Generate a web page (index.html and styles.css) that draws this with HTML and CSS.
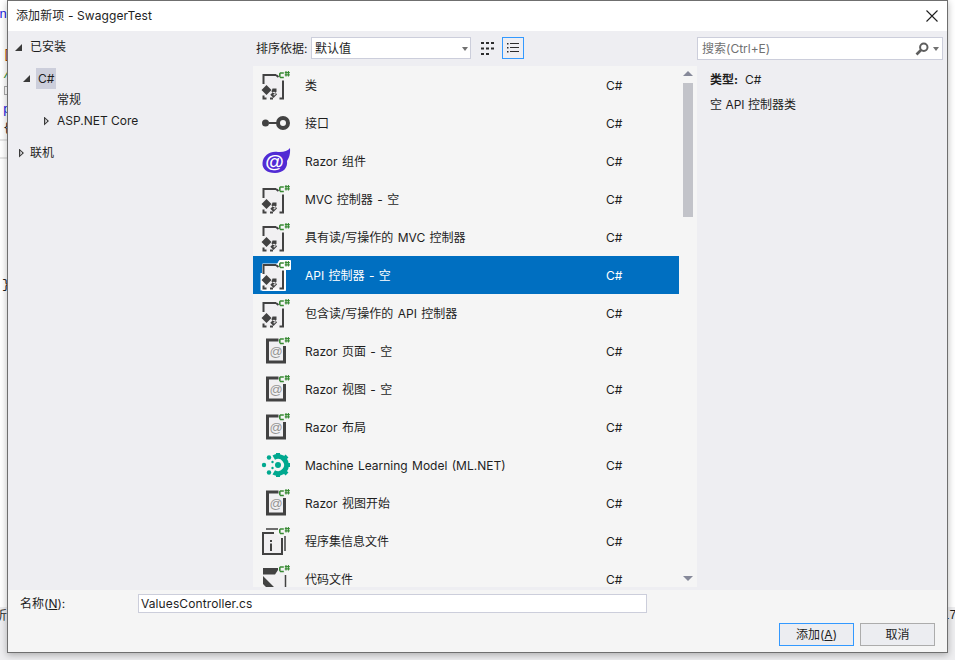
FILE: index.html
```html
<!DOCTYPE html>
<html lang="zh-CN">
<head>
<meta charset="utf-8">
<title>添加新项 - SwaggerTest</title>
<link rel="stylesheet" href="styles.css">
</head>
<body>
<svg class="defs" width="0" height="0" aria-hidden="true">
  <defs>
    <g id="cs">
      <path d="M18 3.400l1.200-1.200h3.600v1.500h-3.200v3h3.200v1.500h-3.600L18 6.500z" fill="#388a34"/>
      <path d="M25 1v5.500M27.400 1v5.500M23.800 2.600h5M23.800 4.900h5" stroke="#388a34" stroke-width="1.100" fill="none"/>
    </g>
    <g id="doc">
      <path d="M2.500 5.500h13l6.500 6v17H2.500z" fill="#f1f0f2"/>
      <path d="M2.500 14V5H15M22 10.500v18h-3.500M15 5l2.500 2" fill="none" stroke="#424242" stroke-width="2"/>
      <path d="M2.500 25.500v3h3M9 28.500h3" fill="none" stroke="#424242" stroke-width="2"/>
      <path d="M5.500 15l5 5-5 5-5-5zM11.500 18.500h4v3.200l-1 1 1.600 1.600-3.600 3.700-3.200-3.200 2.200-2.300-1-1z" fill="#424242"/>
      <path d="M11.800 22.400h2.200v2.400h-1.500" fill="none" stroke="#f1f0f2" stroke-width="1"/>
      <use href="#cs"/>
    </g>
    <g id="razor">
      <path d="M6 4h13l5.500 5v17.500H6z" fill="#f1f0f2"/>
      <path d="M17.500 4H6.500v22h17V10" fill="none" stroke="#424242" stroke-width="3"/>
      <text x="15" y="19.500" class="at">@</text>
      <use href="#cs"/>
    </g>
  </defs>
</svg>

<div class="behind">
  <span class="frag frag-an">an</span>
  <span class="frag frag-br">[</span>
  <span class="frag frag-sl">/</span>
  <span class="frag frag-box"></span>
  <span class="frag frag-p">p</span>
  <span class="frag frag-cu">{</span>
  <span class="frag frag-cl">}</span>
  <span class="rule rule-a"></span>
  <span class="rule rule-b"></span>
  <span class="band"></span>
  <span class="frag frag-ft">未折</span>
  <span class="frag frag-rt">17</span>
</div>

<main class="dialog">
  <header class="titlebar">
    <span class="title">添加新项 - SwaggerTest</span>
    <svg class="close" width="12" height="12" viewBox="0 0 12 12"><path d="M.5.5l11 11M11.500.5l-11 11" stroke="#1e1e1e" stroke-width="1.100" fill="none"/></svg>
  </header>

  <div class="body">
    <nav class="tree">
      <div class="node node-top"><i class="tri-open"></i><span>已安装</span></div>
      <div class="node node-cs"><i class="tri-open"></i><span class="picked">C#</span></div>
      <div class="node node-leaf"><span>常规</span></div>
      <div class="node node-sub"><i class="tri-shut"></i><span>ASP.NET Core</span></div>
      <div class="node node-on"><i class="tri-shut"></i><span>联机</span></div>
    </nav>

    <section class="center">
      <div class="toolbar">
        <label class="sortlabel">排序依据:</label>
        <div class="select"><span>默认值</span><i class="caret"></i></div>
        <button class="viewbtn" aria-label="小图标">
          <svg width="15" height="15" viewBox="0 0 15 15"><path d="M1 1h3v2H1zM6 1h3v2H6zM11 1h3v2h-3zM1 6.500h3v2H1zM6 6.500h3v2H6zM11 6.500h3v2h-3zM1 12h3v2H1zM6 12h3v2H6z" fill="#2c2c2c"/></svg>
        </button>
        <button class="viewbtn viewbtn-on" aria-label="列表">
          <svg width="14" height="12" viewBox="0 0 14 12"><path d="M1 1h1.500v1.500H1zM1 5h1.500v1.500H1zM1 9h1.500v1.500H1zM4 1h9v1H4zM4 5h9v1H4zM4 9h9v1H4z" fill="#2c2c2c"/></svg>
        </button>
      </div>

      <div class="listwrap">
        <ul class="list">
          <li class="row"><svg class="ico" viewBox="0 0 30 30"><use href="#doc"/></svg><span class="name">类</span><span class="lang">C#</span></li>
          <li class="row"><svg class="ico" viewBox="0 0 30 30"><circle cx="4.500" cy="15" r="3.500" fill="#424242"/><path d="M8 15h8" stroke="#424242" stroke-width="2"/><circle cx="22" cy="15" r="5" fill="none" stroke="#424242" stroke-width="4"/></svg><span class="name">接口</span><span class="lang">C#</span></li>
          <li class="row"><svg class="ico" viewBox="0 0 30 30"><path d="M1.500 17C2 9 10 4.500 17 6c5 .5 10-1 12-4 .5 6-1 10-3 13 1 7-4 12-12 12C6 27 1 23 1.500 17z" fill="#512bd4"/><text x="13.500" y="22" class="at-r">@</text></svg><span class="name">Razor 组件</span><span class="lang">C#</span></li>
          <li class="row"><svg class="ico" viewBox="0 0 30 30"><use href="#doc"/></svg><span class="name">MVC 控制器 - 空</span><span class="lang">C#</span></li>
          <li class="row"><svg class="ico" viewBox="0 0 30 30"><use href="#doc"/></svg><span class="name">具有读/写操作的 MVC 控制器</span><span class="lang">C#</span></li>
          <li class="row row-sel"><svg class="ico" viewBox="0 0 30 30"><path d="M1.500 4h15l2-3.500h11v9h-5v21H1.500z" fill="#fff" stroke="#fff" stroke-width="1" stroke-linejoin="round"/><path d="M-.5 13h13v17.500H-.5z" fill="#fff"/><use href="#doc"/></svg><span class="name">API 控制器 - 空</span><span class="lang">C#</span></li>
          <li class="row"><svg class="ico" viewBox="0 0 30 30"><use href="#doc"/></svg><span class="name">包含读/写操作的 API 控制器</span><span class="lang">C#</span></li>
          <li class="row"><svg class="ico" viewBox="0 0 30 30"><use href="#razor"/></svg><span class="name">Razor 页面 - 空</span><span class="lang">C#</span></li>
          <li class="row"><svg class="ico" viewBox="0 0 30 30"><use href="#razor"/></svg><span class="name">Razor 视图 - 空</span><span class="lang">C#</span></li>
          <li class="row"><svg class="ico" viewBox="0 0 30 30"><use href="#razor"/></svg><span class="name">Razor 布局</span><span class="lang">C#</span></li>
          <li class="row"><svg class="ico" viewBox="0 0 30 30"><g fill="#00a88f"><circle cx="3" cy="15" r="2.200"/><circle cx="8" cy="7.500" r="2.200"/><circle cx="8" cy="22.500" r="2.200"/><circle cx="11.500" cy="12" r="1.200"/><circle cx="11.500" cy="18" r="1.200"/><circle cx="17" cy="15" r="3"/><path d="M15 3h4v4h-4zM15 23h4v4h-4zM25.500 13H29v4h-3.500z"/></g><path d="M12.750 7.640A8.500 8.500 0 1 1 12.750 22.360" fill="none" stroke="#00a88f" stroke-width="5"/><path d="M22.500 9.500l3.500-3.500M22.500 20.500l3.500 3.500" stroke="#00a88f" stroke-width="4"/></svg><span class="name">Machine Learning Model (ML.NET)</span><span class="lang">C#</span></li>
          <li class="row"><svg class="ico" viewBox="0 0 30 30"><use href="#razor"/></svg><span class="name">Razor 视图开始</span><span class="lang">C#</span></li>
          <li class="row"><svg class="ico" viewBox="0 0 30 30"><path d="M2 7h12l7 5v17H2z" fill="#f1f0f2"/><path d="M13 7H2v21h19V12" fill="none" stroke="#424242" stroke-width="2"/><path d="M5 3h12M24 10v15" stroke="#424242" stroke-width="1.500"/><path d="M9 14h2v2H9zM9 17.500h2V25H9z" fill="#424242"/><use href="#cs"/></svg><span class="name">程序集信息文件</span><span class="lang">C#</span></li>
          <li class="row"><svg class="ico" viewBox="0 0 30 30"><path d="M2 5h22v25H2z" fill="#f1f0f2"/><path d="M2 4h15v2l-3 4.500H2zM2 12l18 18h-8L2 20z" fill="#424242"/><path d="M24.500 11v19" stroke="#424242" stroke-width="1.500"/><use href="#cs"/></svg><span class="name">代码文件</span><span class="lang">C#</span></li>
        </ul>
        <div class="scroll">
          <i class="arrow-up"></i>
          <i class="thumb"></i>
          <i class="arrow-down"></i>
        </div>
      </div>
    </section>

    <aside class="details">
      <div class="search">
        <span class="hint">搜索(Ctrl+E)</span>
        <svg class="glass" width="14" height="14" viewBox="0 0 14 14"><circle cx="8.800" cy="5.200" r="3.700" fill="none" stroke="#5e5e5e" stroke-width="2"/><path d="M6 8l-4.500 4.500" stroke="#5e5e5e" stroke-width="2.600"/></svg>
        <i class="caret"></i>
      </div>
      <div class="meta"><b>类型:</b><span>C#</span></div>
      <p class="desc">空 API 控制器类</p>
    </aside>
  </div>

  <footer class="footer">
    <div class="namerow">
      <label class="namelabel">名称(<u>N</u>):</label>
      <div class="nameinput">ValuesController.cs</div>
    </div>
    <div class="actions">
      <button class="btn btn-primary">添加(<u>A</u>)</button>
      <button class="btn">取消</button>
    </div>
  </footer>
</main>
</body>
</html>
```

FILE: styles.css
```css
* { box-sizing: border-box; }
html, body { margin: 0; height: 100%; }
body {
  width: 955px;
  height: 660px;
  overflow: hidden;
  position: relative;
  background: #fff;
  font: 12px/16px Inter, "Noto Sans CJK SC", sans-serif;
  color: #1e1e1e;
}
.defs { position: absolute; }
.at { font: 13px "Liberation Sans", sans-serif; fill: #959595; text-anchor: middle; }
.at-r { font: bold 19px "Liberation Sans", sans-serif; fill: #fff; text-anchor: middle; }

.behind { position: absolute; inset: 0; }
.frag { position: absolute; white-space: nowrap; font-family: "Liberation Mono", "Noto Sans CJK SC", monospace; font-size: 13px; line-height: 16px; }
.frag-an { right: 948px; top: 7px; color: #1a1ae0; }
.frag-br { left: 3px; top: 47px; color: #a04000; }
.frag-sl { left: 3px; top: 67px; color: #2f8f2f; }
.frag-box { left: 4px; top: 86px; width: 6px; height: 9px; border: 1px solid #aaa; }
.frag-p { left: 3px; top: 102px; color: #1a1ae0; }
.frag-cu { left: 3px; top: 120px; }
.frag-cl { left: 2px; top: 277px; }
.frag-ft { right: 948px; top: 609px; font-size: 12px; }
.frag-rt { left: 942px; top: 608px; font-size: 12px; }
.rule { position: absolute; left: 0; width: 8px; height: 2px; background: #e6e6e6; }
.rule-a { top: 139px; }
.rule-b { top: 157px; }
.band { position: absolute; left: 0; right: 0; top: 607px; height: 53px; background: #eeeef0; }

.dialog {
  position: absolute;
  left: 7px;
  top: 0;
  width: 941px;
  height: 653px;
  display: flex;
  flex-direction: column;
  border: 1px solid #6f6f6f;
  background: #f5f5f5;
  box-shadow: 0 2px 7px rgba(0, 0, 0, .28);
}

.titlebar {
  height: 30px;
  flex: none;
  display: flex;
  align-items: center;
  justify-content: space-between;
  padding: 0 9px 0 8px;
  background: #fff;
}
.title { letter-spacing: .1px; }

.body { flex: 1; display: flex; background: #eeeef2; min-height: 0; }

.tree { width: 245px; flex: none; padding-top: 8px; }
.node { display: flex; align-items: center; height: 16px; position: relative; }
.node-top { padding-left: 7px; }
.node-top .tri-open { margin-right: 8px; }
.node-cs { padding-left: 15px; margin-top: 13px; height: 21px; }
.node-cs .tri-open { margin-right: 6px; }
.picked { background: #cccedb; width: 20px; height: 21px; line-height: 21px; padding-left: 2px; }
.node-leaf { padding-left: 49px; margin-top: 3px; }
.node-sub { padding-left: 36px; margin-top: 5px; }
.node-sub .tri-shut { margin-right: 8px; }
.node-on { padding-left: 11px; margin-top: 16px; }
.node-on .tri-shut { margin-right: 6px; }
.tri-open {
  width: 0; height: 0; flex: none;
  border-style: solid;
  border-width: 0 0 7px 7px;
  border-color: transparent transparent #3a3a3a transparent;
}
.tri-shut {
  width: 5px; height: 9px; flex: none;
  background: #3a3a3a;
  clip-path: polygon(0 0, 100% 50%, 0 100%, 0 0, 1.300px 25%, 1.300px 75%, 65% 50%, 1.300px 25%);
}

.center { width: 444px; flex: none; display: flex; flex-direction: column; min-height: 0; }
.toolbar { height: 35px; flex: none; display: flex; align-items: flex-start; padding: 6px 0 0 3px; }
.sortlabel { width: 55px; line-height: 24px; flex: none; }
.select {
  width: 160px; height: 22px; flex: none;
  background: #fff;
  border: 1px solid #cccedb;
  display: flex; align-items: center; justify-content: space-between;
  padding: 2px 2px 0 3px;
}
.caret {
  width: 0; height: 0; flex: none;
  border-style: solid;
  border-width: 4px 3.500px 0;
  border-color: #717171 transparent transparent;
}
.viewbtn {
  width: 22px; height: 22px; padding: 0; flex: none;
  border: 1px solid transparent;
  background: transparent;
  display: flex; align-items: center; justify-content: center;
}
.viewbtn:first-of-type { margin-left: 5px; margin-right: 4px; }
.viewbtn-on { border-color: #3399ff; }

.listwrap { height: 521px; flex: none; display: flex; background: #f5f5f5; }
.list { list-style: none; margin: 0; padding: 0; width: 426px; flex: none; overflow: hidden; }
.row { height: 38px; display: flex; align-items: center; }
.ico { width: 30px; height: 30px; flex: none; margin-left: 8px; overflow: visible; }
.name { width: 301px; margin-left: 14px; flex: none; padding-top: 2px; word-spacing: 1px; }
.lang { flex: none; padding-top: 2px; }
.row-sel { background: #006fc1; color: #fff; }

.scroll { width: 18px; flex: none; display: flex; flex-direction: column; align-items: center; }
.thumb { width: 10px; height: 134px; background: #c2c3c9; margin-top: 7px; }
.arrow-up { margin-top: 5px; width: 0; height: 0; border-style: solid; border-width: 0 5px 5px; border-color: transparent transparent #868999; }
.arrow-down { margin-top: auto; margin-bottom: 6px; width: 0; height: 0; border-style: solid; border-width: 5px 5px 0; border-color: #868999 transparent transparent; }

.details { flex: 1; padding: 6px 4px 0 0; min-width: 0; }
.search {
  height: 23px;
  background: #fff;
  border: 1px solid #cccedb;
  display: flex; align-items: center;
  padding: 0 3px 0 4px;
}
.hint { flex: 1; color: #717171; }
.glass { margin-right: 4px; }
.meta { margin: 12px 0 0 13px; display: flex; gap: 7px; }
.meta b { font-weight: 700; }
.desc { margin: 9px 0 0 13px; }

.footer { flex: none; height: 62px; display: flex; flex-direction: column; background: #f5f5f5; }
.namerow { display: flex; align-items: center; height: 19px; margin-top: 4px; padding-left: 12px; }
.namelabel { width: 118px; flex: none; }
.nameinput {
  width: 509px; height: 19px; flex: none;
  background: #fff;
  border: 1px solid #cccedb;
  padding: 0 2px;
  line-height: 17px;
  letter-spacing: .1px;
}
.actions { display: flex; justify-content: flex-end; gap: 6px; margin-top: 10px; padding-right: 12px; }
.btn {
  width: 75px; height: 23px; padding: 0;
  font: inherit; color: inherit;
  background: #ecedf1;
  border: 1px solid #acacac;
}
.btn-primary { border-color: #3399ff; }
```
